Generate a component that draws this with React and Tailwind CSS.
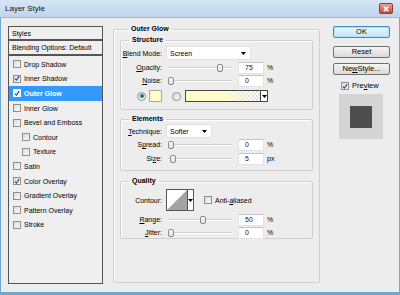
import React from 'react'

const font = { fontFamily: '"Liberation Sans", Arial, sans-serif' }

function Check({ checked, white }) {
  return (
    <span className={`w-[8px] h-[8px] shrink-0 border flex items-center justify-center ${white ? 'border-white bg-white' : 'border-[#8f8f8f] bg-gradient-to-br from-[#dcdcdc] to-[#fafafa]'}`}>
      {checked && (
        <svg width="7" height="7" viewBox="0 0 7 7">
          <path d="M1 3.5 L2.8 5.5 L6 0.8" fill="none" stroke="#1c3d7a" strokeWidth="1.3" />
        </svg>
      )}
    </span>
  )
}

function Radio({ on }) {
  return (
    <span className="w-[9px] h-[9px] rounded-full border border-[#8f8f8f] bg-gradient-to-br from-[#d6d6d6] to-[#fbfbfb] flex items-center justify-center shrink-0">
      {on && <span className="w-[4px] h-[4px] rounded-full bg-[#1b6f8f]" />}
    </span>
  )
}

function Arrow() {
  return (
    <svg width="5" height="3" viewBox="0 0 5 3">
      <path d="M0 0 H5 L2.5 3 Z" fill="#000" />
    </svg>
  )
}

function Ul({ children }) {
  return <span className="underline underline-offset-1">{children}</span>
}

function Slider({ pos, width = 64 }) {
  return (
    <div className="relative h-[10px]" style={{ width }}>
      <div className="absolute left-0 right-0 top-[4px] h-[2px] bg-[#d0d0d0] border-b border-white" />
      <div className="absolute top-[1px] w-[6px] h-[8px] rounded-[2px] border border-[#8a8a8a] bg-gradient-to-b from-white to-[#dedede]" style={{ left: pos }} />
    </div>
  )
}

function Num({ value }) {
  return (
    <div className="w-[26px] h-[12px] bg-white border border-[#e3e3e3] border-t-[#c5c5c5] flex items-center pl-[6px] text-[7px] text-[#222]">
      {value}
    </div>
  )
}

function SliderRow({ label, value, unit, pos }) {
  return (
    <div className="flex items-center h-[13px]">
      <div className="w-[44px] text-right pr-[3px]">{label}</div>
      <div className="ml-[3px]"><Slider pos={pos} /></div>
      <div className="ml-[6px]"><Num value={value} /></div>
      <div className="ml-[3px] text-[7px]">{unit}</div>
    </div>
  )
}

function Group({ title, className, children }) {
  return (
    <fieldset className={`border border-[#cfcfcf] shadow-[inset_1px_1px_0_#fff] rounded-[2px] ${className}`}>
      <legend className="ml-[8px] px-[3px] font-bold text-[7px] leading-[8px]">{title}</legend>
      {children}
    </fieldset>
  )
}

function Btn({ children, primary }) {
  return (
    <div className={`h-[12px] rounded-[2px] border flex items-center justify-center text-[7.5px] ${primary ? 'border-[#3c8ec4] bg-gradient-to-b from-[#eaf6fd] to-[#bee6fd] shadow-[inset_0_0_0_1px_#aee0f8]' : 'border-[#707070] bg-gradient-to-b from-[#f4f4f4] to-[#d9d9d9]'}`}>
      {children}
    </div>
  )
}

const items = [
  { name: 'Drop Shadow' },
  { name: 'Inner Shadow', checked: true },
  { name: 'Outer Glow', checked: true, selected: true },
  { name: 'Inner Glow' },
  { name: 'Bevel and Emboss' },
  { name: 'Contour', indent: true },
  { name: 'Texture', indent: true },
  { name: 'Satin' },
  { name: 'Color Overlay', checked: true },
  { name: 'Gradient Overlay' },
  { name: 'Pattern Overlay' },
  { name: 'Stroke' },
]

export default function App() {
  return (
    <div className="w-[400px] h-[295px] bg-[#6ea7cf] flex flex-col text-black text-[7px] leading-none overflow-hidden" style={font}>
      {/* title bar */}
      <div className="h-[18px] shrink-0 bg-gradient-to-b from-[#d7e6f5] to-[#bfd5ec] flex items-center pl-[5px] pr-[7px] border-b border-[#9fb8d3]">
        <span className="text-[8px] text-[#111]">Layer Style</span>
        <div className="ml-auto w-[14px] h-[11px] rounded-[2px] border border-[#8e3c34] bg-gradient-to-b from-[#e8a494] to-[#c7473a] flex items-center justify-center">
          <svg width="6" height="6" viewBox="0 0 6 6">
            <path d="M0.8 0.8 L5.2 5.2 M5.2 0.8 L0.8 5.2" stroke="#fff" strokeWidth="1.6" />
          </svg>
        </div>
      </div>

      {/* body */}
      <div className="flex-1 ml-[1px] mr-[1px] mb-[3px] bg-[#ededed] flex pl-[7px] pt-[8px] pb-[8px]">
        {/* left styles list */}
        <div className="w-[95px] border border-[#555] bg-[#efefef] flex flex-col">
          <div className="h-[14px] flex items-center pl-[3px] border-b-2 border-[#555]">Styles</div>
          <div className="h-[15px] flex items-center pl-[3px] border-b-2 border-[#555]">Blending Options: Default</div>
          <div className="flex flex-col pt-[1px]">
            {items.map((it) => (
              <div key={it.name} className={`h-[14.6px] flex items-center gap-[3px] ${it.indent ? 'pl-[13px]' : 'pl-[4px]'} ${it.selected ? 'bg-[#3399ff] text-white font-bold' : ''}`}>
                <Check checked={it.checked} white={it.selected} />
                <span>{it.name}</span>
              </div>
            ))}
          </div>
        </div>

        {/* middle */}
        <Group title="Outer Glow" className="ml-[10px] w-[207px] -mt-[1px] mb-[1px] px-[6px] pb-[2px]">
          <Group title="Structure" className="mt-[3px] h-[74px] pb-[3px]">
            <div className="flex items-center h-[14px] mt-[2px]">
              <div className="w-[44px] text-right pr-[3px]"><Ul>B</Ul>lend Mode:</div>
              <div className="ml-[1px] w-[85px] h-[14px] bg-white border border-[#e0e0e0] flex items-center pl-[3px] pr-[4px]">
                <span>Screen</span>
                <span className="ml-auto"><Arrow /></span>
              </div>
            </div>
            <div className="mt-[1px]"><SliderRow label={<><Ul>O</Ul>pacity:</>} value="75" unit="%" pos={49} /></div>
            <SliderRow label={<><Ul>N</Ul>oise:</>} value="0" unit="%" pos={0} />
            <div className="flex items-center h-[14px] mt-[2px] pl-[16px]">
              <Radio on />
              <div className="ml-[3px] w-[13px] h-[12px] bg-[#fffcc8] border border-[#a8a8a8]" />
              <div className="ml-[10px]"><Radio /></div>
              <div className="ml-[4px] w-[83px] h-[12px] border border-[#444] flex">
                <div className="flex-1 bg-[length:4px_4px] bg-[linear-gradient(45deg,#ddd_25%,transparent_25%,transparent_75%,#ddd_75%),linear-gradient(45deg,#ddd_25%,#fff_25%,#fff_75%,#ddd_75%)] bg-[position:0_0,2px_2px] relative">
                  <div className="absolute inset-0 bg-gradient-to-r from-[#fffcc8] via-[#fffccd] to-transparent" />
                </div>
                <div className="w-[7px] border-l border-[#444] bg-white flex items-center justify-center"><Arrow /></div>
              </div>
            </div>
          </Group>

          <Group title="Elements" className="mt-[5px] h-[56px]">
            <div className="flex items-center h-[14px] mt-[1px]">
              <div className="w-[44px] text-right pr-[3px]"><Ul>T</Ul>echnique:</div>
              <div className="ml-[1px] w-[46px] h-[14px] bg-white border border-[#e0e0e0] flex items-center pl-[3px] pr-[4px]">
                <span>Softer</span>
                <span className="ml-auto"><Arrow /></span>
              </div>
            </div>
            <SliderRow label={<>S<Ul>p</Ul>read:</>} value="0" unit="%" pos={0} />
            <div className="mt-[1px]"><SliderRow label={<>Si<Ul>z</Ul>e:</>} value="5" unit="px" pos={2} /></div>
          </Group>

          <Group title="Quality" className="mt-[6px] h-[62px]">
            <div className="flex items-center h-[22px] mt-[4px]">
              <div className="w-[44px] text-right pr-[3px]">Contour:</div>
              <div className="ml-[1px] h-[22px] border border-[#555] flex bg-white">
                <svg width="20" height="20" viewBox="0 0 20 20" className="block">
                  <rect width="20" height="20" fill="#fff" />
                  <path d="M0 20 L20 0 L20 20 Z" fill="#a3a3a3" />
                </svg>
                <div className="w-[6px] border-l border-[#555] flex items-center justify-center"><Arrow /></div>
              </div>
              <div className="ml-[10px]"><Check /></div>
              <span className="ml-[3px]">Anti-<Ul>a</Ul>liased</span>
            </div>
            <div className="mt-[2px]"><SliderRow label={<><Ul>R</Ul>ange:</>} value="50" unit="%" pos={32} /></div>
            <SliderRow label={<><Ul>J</Ul>itter:</>} value="0" unit="%" pos={0} />
          </Group>
        </Group>

        {/* right */}
        <div className="ml-[13px] w-[57px] flex flex-col">
          <Btn primary>OK</Btn>
          <div className="mt-[8px]"><Btn>Reset</Btn></div>
          <div className="mt-[5px]"><Btn>Ne<Ul>w</Ul> Style...</Btn></div>
          <div className="mt-[7px] flex items-center gap-[3px] pl-[8px] text-[7.5px]">
            <Check checked />
            <span>Pre<Ul>v</Ul>iew</span>
          </div>
          <div className="mt-[4px] ml-[6px] w-[44px] h-[45px] bg-[#d4d4d4] flex items-center justify-center">
            <div className="w-[22px] h-[22px] bg-[#4d4d4d]" />
          </div>
        </div>
      </div>
    </div>
  )
}
